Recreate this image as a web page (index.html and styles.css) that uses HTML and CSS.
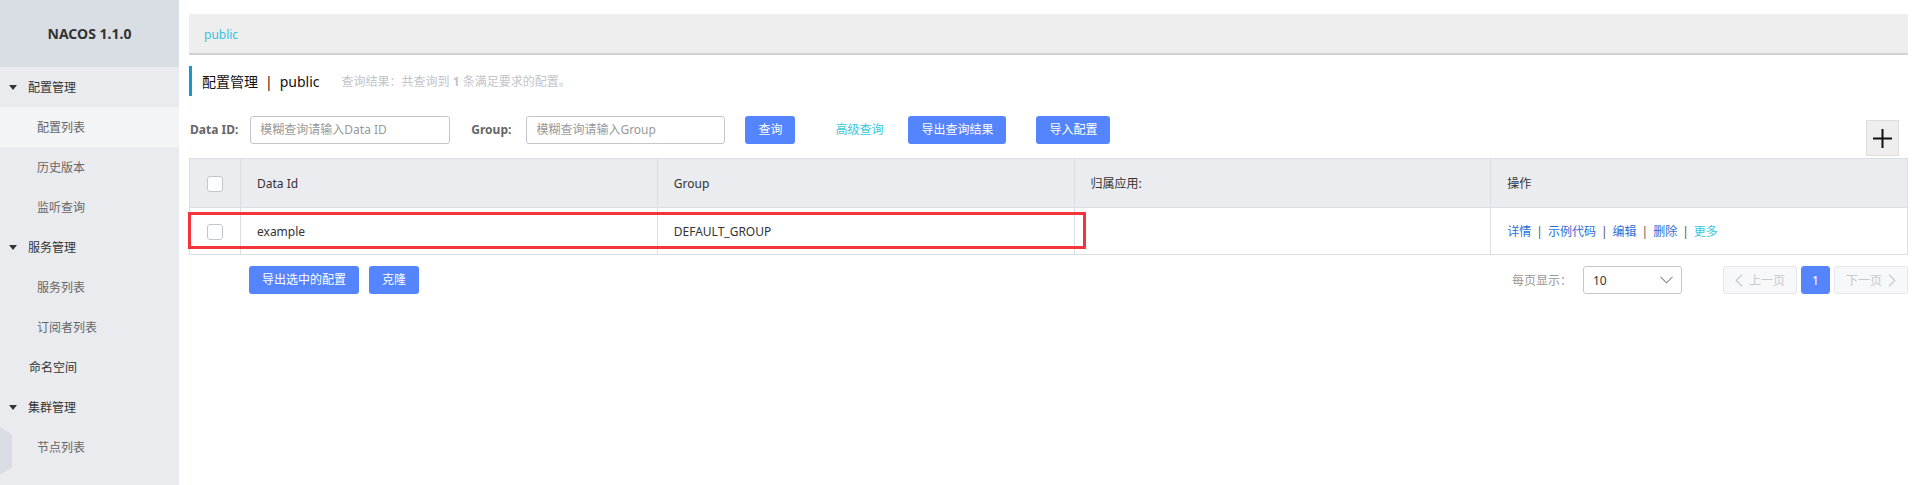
FILE: index.html
```html
<!DOCTYPE html>
<html lang="zh-CN">
<head>
<meta charset="utf-8">
<title>NACOS 1.1.0</title>
<link rel="stylesheet" href="styles.css">
</head>
<body>
<div class="app">
  <aside class="sidebar">
    <div class="brand">NACOS 1.1.0</div>
    <ul class="menu">
      <li class="menu-group"><span class="caret"></span>配置管理</li>
      <li class="menu-item active">配置列表</li>
      <li class="menu-item">历史版本</li>
      <li class="menu-item">监听查询</li>
      <li class="menu-group"><span class="caret"></span>服务管理</li>
      <li class="menu-item">服务列表</li>
      <li class="menu-item">订阅者列表</li>
      <li class="menu-group plain">命名空间</li>
      <li class="menu-group"><span class="caret"></span>集群管理</li>
      <li class="menu-item">节点列表</li>
    </ul>
    <div class="hex"></div>
  </aside>

  <main class="main">
    <div class="breadcrumb"><span class="crumb">public</span></div>

    <div class="page-title">
      <span class="title">配置管理<span class="sep">|</span>public</span>
      <span class="summary">查询结果：共查询到 <b>1</b> 条满足要求的配置。</span>
    </div>

    <div class="search">
      <label class="field-label">Data ID:</label>
      <div class="input input-dataid">模糊查询请输入Data ID</div>
      <label class="field-label group-label">Group:</label>
      <div class="input input-group">模糊查询请输入Group</div>
      <button class="btn btn-query">查询</button>
      <a class="link-advanced">高级查询</a>
      <button class="btn btn-export">导出查询结果</button>
      <button class="btn btn-import">导入配置</button>
      <button class="btn-add" aria-label="add">
        <svg width="19" height="19" viewBox="0 0 19 19"><path d="M9.5 0V19M0 9.5H19" stroke="#111" stroke-width="2" fill="none"/></svg>
      </button>
    </div>

    <div class="table-wrap">
      <table class="grid">
        <colgroup>
          <col class="col-check">
          <col><col><col><col>
        </colgroup>
        <thead>
          <tr>
            <th class="cell-check"><span class="checkbox"></span></th>
            <th>Data Id</th>
            <th>Group</th>
            <th>归属应用:</th>
            <th>操作</th>
          </tr>
        </thead>
        <tbody>
          <tr>
            <td class="cell-check"><span class="checkbox"></span></td>
            <td>example</td>
            <td>DEFAULT_GROUP</td>
            <td></td>
            <td class="ops">
              <a class="op">详情</a><span class="op-sep">|</span><a class="op">示例代码</a><span class="op-sep">|</span><a class="op">编辑</a><span class="op-sep">|</span><a class="op">删除</a><span class="op-sep">|</span><a class="op more">更多</a>
            </td>
          </tr>
        </tbody>
      </table>
      <div class="highlight"></div>
    </div>

    <div class="footer">
      <div class="bulk">
        <button class="btn">导出选中的配置</button>
        <button class="btn">克隆</button>
      </div>
      <div class="pager">
        <span class="pager-label">每页显示：</span>
        <div class="select">
          <span>10</span>
          <svg width="13" height="8" viewBox="0 0 13 8"><path d="M0.5 0.8L6.5 6.8L12.5 0.8" stroke="#888" stroke-width="1.1" fill="none"/></svg>
        </div>
        <button class="page-btn prev">
          <svg width="8" height="13" viewBox="0 0 8 13"><path d="M7 0.8L1.2 6.5L7 12.2" stroke="#c8c9cc" stroke-width="1.2" fill="none"/></svg>
          <span>上一页</span>
        </button>
        <button class="page-btn current">1</button>
        <button class="page-btn next">
          <span>下一页</span>
          <svg width="8" height="13" viewBox="0 0 8 13"><path d="M1 0.8L6.8 6.5L1 12.2" stroke="#c8c9cc" stroke-width="1.2" fill="none"/></svg>
        </button>
      </div>
    </div>
  </main>
</div>
</body>
</html>
```

FILE: styles.css
```css
* { box-sizing: border-box; }

html, body {
  margin: 0;
  padding: 0;
  height: 100%;
  background: #fff;
  font-family: "Noto Sans", "Noto Sans CJK SC", sans-serif;
  font-size: 12px;
  color: #333;
}

.app {
  display: flex;
  height: 485px;
  overflow: hidden;
}

/* ---------- sidebar ---------- */
.sidebar {
  position: relative;
  width: 179px;
  flex: none;
  background: #e9ebef;
}

.brand {
  height: 67px;
  background: #d9dde4;
  display: flex;
  align-items: center;
  justify-content: center;
  font-weight: bold;
  font-size: 14px;
  color: #333;
}

.menu {
  list-style: none;
  margin: 0;
  padding: 0;
}

.menu-group,
.menu-item {
  height: 40px;
  display: flex;
  align-items: center;
  font-size: 12px;
}

.menu-group {
  padding-left: 9px;
  color: #333;
}

.menu-group.plain {
  padding-left: 29px;
}

.caret {
  width: 0;
  height: 0;
  border-left: 4.5px solid transparent;
  border-right: 4.5px solid transparent;
  border-top: 5px solid #333;
  margin-right: 11px;
}

.menu-item {
  padding-left: 37px;
  color: #666;
}

.menu-item.active {
  background: #f3f4f6;
}

.hex {
  position: absolute;
  left: 0;
  top: 427px;
  width: 12px;
  height: 48px;
  background: #d9dde3;
  clip-path: polygon(0 0, 100% 16%, 100% 84%, 0 100%);
}

/* ---------- main ---------- */
.main {
  flex: 1;
  min-width: 0;
  padding: 14px 5px 0 10px;
}

.breadcrumb {
  height: 41px;
  background: #eeeeee;
  border-bottom: 2px solid #d2d2d2;
  display: flex;
  align-items: center;
  padding-left: 15px;
  padding-top: 2px;
}

.crumb {
  color: #35c3dd;
  font-size: 12px;
}

.page-title {
  margin-top: 11px;
  height: 30px;
  border-left: 3px solid #1398d3;
  display: flex;
  align-items: center;
  padding-left: 10px;
}

.title {
  font-size: 14px;
  color: #111;
}

.title .sep {
  margin: 0 7px;
}

.summary {
  margin-left: 22px;
  color: #c2c4c9;
  font-size: 12px;
}

.summary b {
  font-weight: bold;
}

/* ---------- search ---------- */
.search {
  margin-top: 20px;
  display: flex;
  align-items: flex-start;
}

.field-label {
  height: 28px;
  line-height: 28px;
  font-weight: bold;
  color: #666;
  font-size: 12px;
  padding-left: 1px;
}

.group-label {
  margin-left: 20px;
}

.input {
  height: 28px;
  width: 200px;
  border: 1px solid #c4c6cf;
  border-radius: 3px;
  margin-left: 12px;
  padding-left: 9px;
  line-height: 26px;
  color: #999;
  font-size: 12px;
}

.input-group {
  margin-left: 15px;
  width: 199px;
}

.btn {
  height: 28px;
  padding: 0 13px;
  border: none;
  border-radius: 3px;
  background: #5584ff;
  color: #fff;
  font-family: inherit;
  font-size: 12px;
  line-height: 28px;
}

.btn-query {
  margin-left: 20px;
}

.link-advanced {
  height: 28px;
  line-height: 28px;
  margin-left: 40px;
  color: #35c8e0;
}

.btn-export {
  margin-left: 25px;
}

.btn-import {
  margin-left: 30px;
}

.btn-add {
  margin-left: auto;
  margin-right: 9px;
  margin-top: 4px;
  width: 33px;
  height: 36px;
  background: #eeeeee;
  border: 1px solid #dddddd;
  padding: 0;
  display: flex;
  align-items: center;
  justify-content: center;
}

/* ---------- table ---------- */
.table-wrap {
  position: relative;
  margin-top: 2px;
}

.grid {
  width: 100%;
  border-collapse: collapse;
  table-layout: fixed;
  border: 1px solid #dcdee3;
}

.col-check {
  width: 51px;
}

.grid th,
.grid td {
  border: 1px solid #dcdee3;
  text-align: left;
  padding: 0 0 0 16px;
  font-size: 12px;
  color: #333;
}

.grid th {
  height: 49px;
  background: #ebecf0;
  font-weight: normal;
}

.grid td {
  height: 47px;
  background: #fff;
}

.grid .cell-check {
  padding: 0;
  text-align: center;
}

.checkbox {
  display: inline-block;
  vertical-align: middle;
  width: 16px;
  height: 16px;
  background: #fff;
  border: 1px solid #c4c6cf;
  border-radius: 3px;
}

.op {
  color: #2a6ed8;
}

.op.more {
  color: #35c8e0;
}

.op-sep {
  margin: 0 5px;
  color: #555;
}

.highlight {
  position: absolute;
  left: -1px;
  top: 54px;
  width: 898px;
  height: 37px;
  border: 3px solid #f5333b;
  pointer-events: none;
}

/* ---------- footer ---------- */
.footer {
  margin-top: 11px;
  display: flex;
  align-items: center;
}

.bulk {
  display: flex;
  gap: 10px;
  margin-left: 60px;
}

.pager {
  margin-left: auto;
  display: flex;
  align-items: center;
}

.pager-label {
  color: #999;
  font-size: 12px;
}

.select {
  margin-left: 11px;
  width: 99px;
  height: 28px;
  border: 1px solid #c4c6cf;
  border-radius: 3px;
  display: flex;
  align-items: center;
  justify-content: space-between;
  padding: 0 8px 0 9px;
  color: #333;
}

.page-btn {
  height: 28px;
  border: 1px solid #e6e7eb;
  border-radius: 3px;
  background: #f7f8fa;
  color: #c8c9cc;
  font-family: inherit;
  font-size: 12px;
  display: flex;
  align-items: center;
  justify-content: center;
  gap: 6px;
  padding: 0;
}

.page-btn.prev {
  margin-left: 41px;
  width: 74px;
}

.page-btn.current {
  margin-left: 4px;
  width: 29px;
  background: #5584ff;
  border-color: #5584ff;
  color: #fff;
  font-size: 13px;
}

.page-btn.next {
  margin-left: 4px;
  width: 74px;
}
```
